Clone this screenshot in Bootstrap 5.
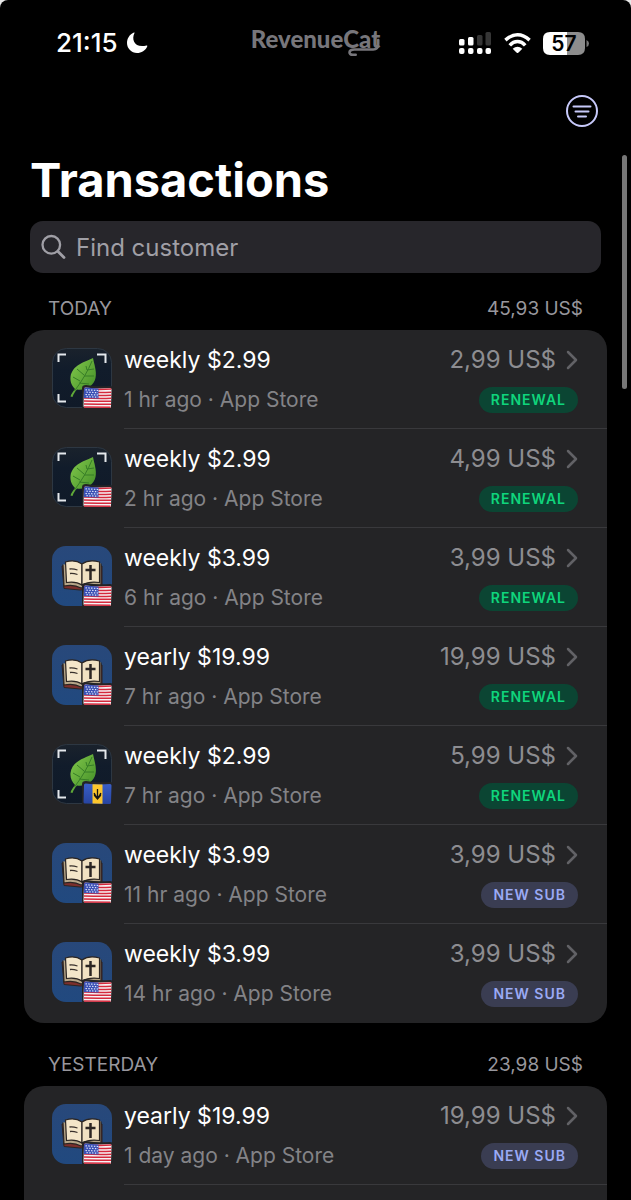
<!DOCTYPE html>
<html lang="en" data-bs-theme="dark">
<head>
<meta charset="utf-8">
<meta name="viewport" content="width=device-width, initial-scale=1">
<title>Transactions</title>
<link href="https://cdn.jsdelivr.net/npm/bootstrap@5.3.0/dist/css/bootstrap.min.css" rel="stylesheet">
<style>
  body { background: #e8e8e8; font-family: Inter, "Noto Sans", sans-serif; color: #fff; }
  svg { display: block; flex: none; }
  .app { min-height: 100vh; padding: 0 24px; background: #000; border-radius: 8px 8px 0 0; }
  .status { height: 86px; padding: 0 18px 0 32px; }
  .status-icons { gap: 11px; }
  .clock { font-size: 26px; line-height: 32px; font-weight: 500; }
  .wordmark { font-family: Lato, sans-serif; font-weight: 900; font-size: 24px; line-height: 32px; color: #77767b; top: 23px; left: 50%; transform: translateX(-50%); }
  .wordmark svg { right: -1px; bottom: -4px; }
  .battery { width: 46px; height: 23px; }
  .battery-text { font-size: 21px; font-weight: 600; line-height: 23px; color: #000; inset: 0 4px 0 0; }
  .toolbar { height: 50px; padding: 0 8px; }
  .page-title { font-size: 47px; line-height: 60px; font-weight: 700; margin: 14px 6px 11px; }
  .search { margin: 0 6px; height: 52px; border-radius: 13px; background: #27262b; padding: 0 11px; gap: 10px; }
  .search input { background: none; border: 0; outline: 0; color: #fff; font-size: 24px; line-height: 32px; padding: 2px 0 0; min-width: 0; }
  .search input::placeholder { color: #a09fa6; opacity: 1; }
  .group-head { padding: 0 24px; font-size: 19px; line-height: 24px; color: #98979d; margin: 24px 0 9px; }
  .group-head h2 { font-size: 19px; line-height: 24px; font-weight: 400; margin: 0; color: inherit; }
  .group-head.later { margin-top: 30px; }
  .tx-list { background: #242426; border-radius: 20px; }
  .tx-list.open { border-radius: 20px 20px 0 0; }
  .tx { color: #fff; text-decoration: none; padding-left: 28px; gap: 12px; height: 99px; }
  .app-icon { width: 60px; height: 60px; margin-top: 18px; }
  .flag { right: -1px; bottom: -2px; }
  .tx-body { padding: 14px 29px 0 0; border-bottom: 1px solid #39393c; height: 99px; }
  .tx-list:not(.open) .tx:last-child .tx-body { border-bottom-color: transparent; }
  .tx-name { font-size: 23px; line-height: 32px; }
  .tx-sum { font-size: 24px; line-height: 32px; color: #8d8d91; gap: 10px; }
  .tx-meta { font-size: 21px; line-height: 32px; color: #838387; }
  .line-two { margin-top: 8px; }
  .pill { font-size: 14px; line-height: 26px; font-weight: 600; border-radius: 13px; padding: 0 12px; letter-spacing: 1px; }
  .pill-renewal { background: #0b4533; color: #0fd57c; }
  .pill-new { background: #3a3d52; color: #9aaaf5; }
  .scroll-thumb { width: 5px; height: 234px; border-radius: 3px; background: #777; right: 4px; top: 155px; }
</style>
</head>
<body>
<svg width="0" height="0" class="position-absolute" aria-hidden="true">
  <defs>
    <linearGradient id="leafFill" x1="0" y1="0" x2="1" y2="1"><stop offset="0" stop-color="#83c94c"/><stop offset="1" stop-color="#3e8a25"/></linearGradient>
    <linearGradient id="night" x1="0" y1="0" x2="0" y2="1"><stop offset="0" stop-color="#1a222c"/><stop offset=".35" stop-color="#111c2b"/><stop offset="1" stop-color="#101a28"/></linearGradient>
    <linearGradient id="sky" x1="0" y1="0" x2="0" y2="1"><stop offset="0" stop-color="#28487a"/><stop offset="1" stop-color="#21497f"/></linearGradient>
    <linearGradient id="bbBlue" x1="0" y1="0" x2="0" y2="1"><stop offset="0" stop-color="#3a5fc8"/><stop offset="1" stop-color="#2744a0"/></linearGradient>
    <symbol id="plant" viewBox="0 0 60 60">
      <rect x=".5" y=".5" width="59" height="59" rx="14" fill="url(#night)" stroke="#2d3742"/>
      <path d="M6.500 14V6.500H14M45 6.500H53.500V15M6.500 46V53.500H14" fill="none" stroke="#e4e8ec" stroke-width="2"/>
      <path d="M41 10C33 14 20 17 18.500 29C18 34 20 38 23 41C21 44 19 46 18.500 48.500L20.500 49C21.500 46 23 43.500 25 41.500C33 43 42 38 43.500 30C45 23 42 16 41 10Z" fill="url(#leafFill)"/>
      <path d="M40 13C36 23 30 33 22.500 43M35 22L34 18M32 27L25 21M28 33L21 29M35 22L42 21M32 28L42 28M27 35L37 36" fill="none" stroke="#377d27" stroke-width="1"/>
    </symbol>
    <symbol id="book" viewBox="0 0 60 60">
      <rect width="60" height="60" rx="14" fill="url(#sky)"/>
      <path d="M10 20L12 42.500L28 44L50 42.500V20Z" fill="#7c2f2c" stroke="#2b2523"/>
      <path d="M11 18.500L12 40Q22 38 29 42Q38 38 49 40V17.500" fill="#b5a588" stroke="#2b2523" stroke-width="1.200"/>
      <path d="M13.500 16Q23 13 30 18V39Q24 35 14.500 36.500Z" fill="#f4e6c9" stroke="#2b2523" stroke-width="1.200"/>
      <path d="M30 18Q37 13 47.500 16V36.500Q37 35 30 39Z" fill="#f1e1c2" stroke="#2b2523" stroke-width="1.200"/>
      <path d="M17.500 23Q21 22.500 25.500 24M18 27.500Q21 27 25.500 28.500" fill="none" stroke="#38302b" stroke-width="1.300"/>
      <path d="M38.500 19V34M33.500 24H43.500" fill="none" stroke="#2b2523" stroke-width="2.500"/>
    </symbol>
    <symbol id="usa" viewBox="0 0 32 25">
      <path d="M5 0Q16 2 29 1Q32 1 32 4V25H4Q1 25 1 22V3Q1 0 5 0Z" fill="#242426"/>
      <path d="M4.500 2.500Q17 4 29 3Q30.500 3 30.500 4.500L30 21.500Q30 23 28.500 23Q16 22.500 4 22.500Q2.500 22.500 2.500 21L3 4Q3 2.500 4.500 2.500Z" fill="#f6f3f5"/>
      <path d="M3 3.600Q17 5 30.300 3.900M3 6.800Q17 8 30.300 7.200M3 10Q17 11 30.300 10.300M3 13Q17 13.800 30.300 13.300M3 16Q17 16.500 30 16.300M3 19Q17 19.300 30 19.300M3 22Q17 22 29.500 22.300" fill="none" stroke="#d5293c" stroke-width="1.500"/>
      <path d="M3 4Q3 2.500 4.500 2.500L17.500 3.400V13.600L2.800 13Z" fill="#3b51b5"/>
      <path d="M4.500 4.800L17 5.500M5.500 7.200L17 7.700M4.500 9.500L17 10M5.500 11.700L17 12.200" stroke="#dfe4fa" stroke-width="1.200" stroke-dasharray="1.400 1.400"/>
    </symbol>
    <symbol id="barbados" viewBox="0 0 32 25">
      <path d="M5 0Q16 2 29 1Q32 1 32 4V25H4Q1 25 1 22V3Q1 0 5 0Z" fill="#242426"/>
      <path d="M4.500 2.500Q17 4 29 3Q30.500 3 30.500 4.500L30 21.500Q30 23 28.500 23Q16 22.500 4 22.500Q2.500 22.500 2.500 21L3 4Q3 2.500 4.500 2.500Z" fill="url(#bbBlue)"/>
      <path d="M11.500 3.200L21.500 3.500V22.800L11.500 22.500Z" fill="#fcc62d"/>
      <path d="M16.500 8V18.500M13 12L16.500 17.500L20 12M13.500 12V14.500L16.500 18L19.500 14.500V12" fill="none" stroke="#151515" stroke-width="1.300"/>
    </symbol>
    <symbol id="chevron" viewBox="0 0 12 20"><path d="M2 2L10 10L2 18" fill="none" stroke="#626266" stroke-width="2.500" stroke-linecap="round" stroke-linejoin="round"/></symbol>
  </defs>
</svg>

<div class="app d-flex flex-column position-relative">
  <header class="status d-flex align-items-center justify-content-between">
    <div class="d-flex align-items-center gap-2">
      <span class="clock">21:15</span>
      <svg width="22" height="22" viewBox="0 0 22 22" role="img" aria-label="Do not disturb"><path d="M8.500 1C5 8 9 16.500 20.500 13.500C21.200 13.300 21.500 14 21.200 14.500C19.500 18.500 15.500 21 11 21C5.500 21 1 16.500 1 11C1 6.500 3.500 2.500 7.500.7C8.200.4 8.800.5 8.500 1Z" fill="#fff"/></svg>
    </div>
    <div class="wordmark position-absolute">RevenueCat
      <svg class="position-absolute" width="36" height="22" viewBox="0 0 36 22" aria-hidden="true"><path d="M33 3V7Q33 12.500 28 12.500H9C3 12.500 3 17.800 7.500 17.800H10.500" fill="none" stroke="#77767b" stroke-width="2.600" stroke-linecap="round"/></svg>
    </div>
    <div class="status-icons d-flex align-items-center">
      <svg width="34" height="24" viewBox="0 0 34 24" role="img" aria-label="Signal"><g fill="#fff"><rect x="1" y="8" width="5.500" height="6.500" rx="1.500"/><rect x="10" y="6" width="5.500" height="8.500" rx="1.500"/><rect x="1" y="17" width="5.500" height="6" rx="2"/><rect x="10" y="17" width="5.500" height="6" rx="2"/><rect x="19" y="17" width="5.500" height="6" rx="2"/><rect x="27.500" y="17" width="5.500" height="6" rx="2"/></g><g fill="#363636"><rect x="19" y="4" width="5.500" height="10.500" rx="1.500"/><rect x="27.500" y="1" width="5.500" height="13.500" rx="1.500"/></g></svg>
      <svg width="29" height="22" viewBox="0 0 30 22" role="img" aria-label="Wi-Fi"><g fill="none" stroke="#fff" stroke-width="3.600"><path d="M2.500 8Q8.500 2.500 15 2.500T27.500 8"/><path d="M7 13.500Q10.500 9.500 15 9.500T23 13.500"/></g><path d="M10 17Q15 13 20 17L15.800 21Q15 21.600 14.200 21Z" fill="#fff"/></svg>
      <div class="battery position-relative">
        <svg width="46" height="23" viewBox="0 0 46 23" aria-hidden="true"><path d="M7 0H24V23H7Q0 23 0 16V7Q0 0 7 0Z" fill="#fff"/><path d="M24 0H35Q42 0 42 7V16Q42 23 35 23H24Z" fill="#8d8d8d"/><path d="M43.500 8Q46 9 46 11.500T43.500 15Z" fill="#777"/></svg>
        <span class="battery-text position-absolute text-center">57</span>
      </div>
    </div>
  </header>

  <div class="toolbar d-flex align-items-center justify-content-end">
    <button class="btn p-0 border-0" type="button" aria-label="Filter">
      <svg width="34" height="34" viewBox="0 0 34 34"><g fill="none" stroke="#c7c9fa" stroke-width="2" stroke-linecap="round"><circle cx="17" cy="17" r="15"/><path d="M8.500 12.500H25.500M10.500 17.500H23.500M13 22.500H21"/></g></svg>
    </button>
  </div>

  <h1 class="page-title">Transactions</h1>

  <label class="search d-flex align-items-center">
    <svg width="25" height="26" viewBox="0 0 25 26" aria-hidden="true"><g fill="none" stroke="#a09fa6" stroke-width="2.300" stroke-linecap="round"><circle cx="10.300" cy="10.800" r="8.800"/><path d="M17 17.500L23 23.500" stroke-width="2.800"/></g></svg>
    <input class="flex-grow-1" type="search" placeholder="Find customer" aria-label="Find customer">
  </label>

  <div class="group-head d-flex justify-content-between"><h2>TODAY</h2><span>45,93 US$</span></div>
  <div class="tx-list">
    <a href="#" class="tx d-flex">
      <div class="app-icon position-relative flex-shrink-0"><svg width="60" height="60"><use href="#plant"/></svg><svg class="flag position-absolute" width="32" height="25"><use href="#usa"/></svg></div>
      <div class="tx-body flex-grow-1">
        <div class="d-flex justify-content-between"><span class="tx-name">weekly $2.99</span><span class="tx-sum d-flex align-items-center">2,99 US$<svg width="12" height="20"><use href="#chevron"/></svg></span></div>
        <div class="line-two d-flex justify-content-between align-items-center"><span class="tx-meta">1 hr ago · App Store</span><span class="pill pill-renewal">RENEWAL</span></div>
      </div>
    </a>
    <a href="#" class="tx d-flex">
      <div class="app-icon position-relative flex-shrink-0"><svg width="60" height="60"><use href="#plant"/></svg><svg class="flag position-absolute" width="32" height="25"><use href="#usa"/></svg></div>
      <div class="tx-body flex-grow-1">
        <div class="d-flex justify-content-between"><span class="tx-name">weekly $2.99</span><span class="tx-sum d-flex align-items-center">4,99 US$<svg width="12" height="20"><use href="#chevron"/></svg></span></div>
        <div class="line-two d-flex justify-content-between align-items-center"><span class="tx-meta">2 hr ago · App Store</span><span class="pill pill-renewal">RENEWAL</span></div>
      </div>
    </a>
    <a href="#" class="tx d-flex">
      <div class="app-icon position-relative flex-shrink-0"><svg width="60" height="60"><use href="#book"/></svg><svg class="flag position-absolute" width="32" height="25"><use href="#usa"/></svg></div>
      <div class="tx-body flex-grow-1">
        <div class="d-flex justify-content-between"><span class="tx-name">weekly $3.99</span><span class="tx-sum d-flex align-items-center">3,99 US$<svg width="12" height="20"><use href="#chevron"/></svg></span></div>
        <div class="line-two d-flex justify-content-between align-items-center"><span class="tx-meta">6 hr ago · App Store</span><span class="pill pill-renewal">RENEWAL</span></div>
      </div>
    </a>
    <a href="#" class="tx d-flex">
      <div class="app-icon position-relative flex-shrink-0"><svg width="60" height="60"><use href="#book"/></svg><svg class="flag position-absolute" width="32" height="25"><use href="#usa"/></svg></div>
      <div class="tx-body flex-grow-1">
        <div class="d-flex justify-content-between"><span class="tx-name">yearly $19.99</span><span class="tx-sum d-flex align-items-center">19,99 US$<svg width="12" height="20"><use href="#chevron"/></svg></span></div>
        <div class="line-two d-flex justify-content-between align-items-center"><span class="tx-meta">7 hr ago · App Store</span><span class="pill pill-renewal">RENEWAL</span></div>
      </div>
    </a>
    <a href="#" class="tx d-flex">
      <div class="app-icon position-relative flex-shrink-0"><svg width="60" height="60"><use href="#plant"/></svg><svg class="flag position-absolute" width="32" height="25"><use href="#barbados"/></svg></div>
      <div class="tx-body flex-grow-1">
        <div class="d-flex justify-content-between"><span class="tx-name">weekly $2.99</span><span class="tx-sum d-flex align-items-center">5,99 US$<svg width="12" height="20"><use href="#chevron"/></svg></span></div>
        <div class="line-two d-flex justify-content-between align-items-center"><span class="tx-meta">7 hr ago · App Store</span><span class="pill pill-renewal">RENEWAL</span></div>
      </div>
    </a>
    <a href="#" class="tx d-flex">
      <div class="app-icon position-relative flex-shrink-0"><svg width="60" height="60"><use href="#book"/></svg><svg class="flag position-absolute" width="32" height="25"><use href="#usa"/></svg></div>
      <div class="tx-body flex-grow-1">
        <div class="d-flex justify-content-between"><span class="tx-name">weekly $3.99</span><span class="tx-sum d-flex align-items-center">3,99 US$<svg width="12" height="20"><use href="#chevron"/></svg></span></div>
        <div class="line-two d-flex justify-content-between align-items-center"><span class="tx-meta">11 hr ago · App Store</span><span class="pill pill-new">NEW SUB</span></div>
      </div>
    </a>
    <a href="#" class="tx d-flex">
      <div class="app-icon position-relative flex-shrink-0"><svg width="60" height="60"><use href="#book"/></svg><svg class="flag position-absolute" width="32" height="25"><use href="#usa"/></svg></div>
      <div class="tx-body flex-grow-1">
        <div class="d-flex justify-content-between"><span class="tx-name">weekly $3.99</span><span class="tx-sum d-flex align-items-center">3,99 US$<svg width="12" height="20"><use href="#chevron"/></svg></span></div>
        <div class="line-two d-flex justify-content-between align-items-center"><span class="tx-meta">14 hr ago · App Store</span><span class="pill pill-new">NEW SUB</span></div>
      </div>
    </a>
  </div>

  <div class="group-head later d-flex justify-content-between"><h2>YESTERDAY</h2><span>23,98 US$</span></div>
  <div class="tx-list open flex-grow-1">
    <a href="#" class="tx d-flex">
      <div class="app-icon position-relative flex-shrink-0"><svg width="60" height="60"><use href="#book"/></svg><svg class="flag position-absolute" width="32" height="25"><use href="#usa"/></svg></div>
      <div class="tx-body flex-grow-1">
        <div class="d-flex justify-content-between"><span class="tx-name">yearly $19.99</span><span class="tx-sum d-flex align-items-center">19,99 US$<svg width="12" height="20"><use href="#chevron"/></svg></span></div>
        <div class="line-two d-flex justify-content-between align-items-center"><span class="tx-meta">1 day ago · App Store</span><span class="pill pill-new">NEW SUB</span></div>
      </div>
    </a>
  </div>
  <div class="scroll-thumb position-absolute" aria-hidden="true"></div>
</div>
<script src="https://cdn.jsdelivr.net/npm/bootstrap@5.3.0/dist/js/bootstrap.bundle.min.js"></script>
</body>
</html>
